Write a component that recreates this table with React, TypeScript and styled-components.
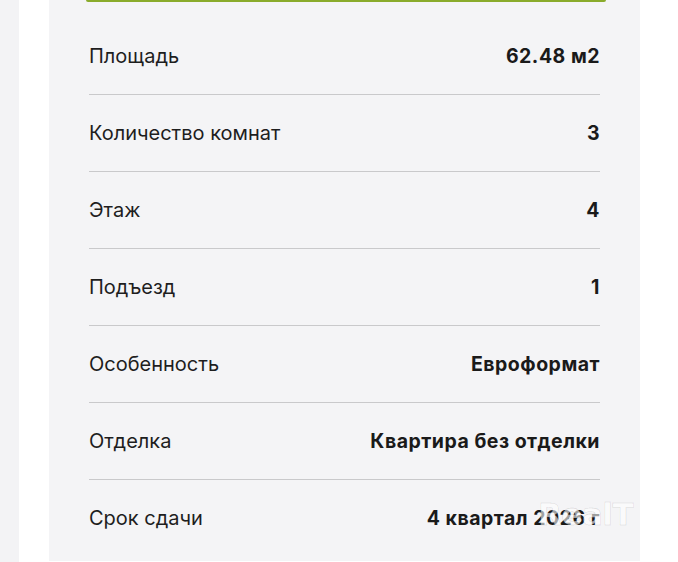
import React from "react";
import styled, { createGlobalStyle } from "styled-components";

const GlobalStyle = createGlobalStyle`
  html, body {
    margin: 0;
    padding: 0;
    background: #ffffff;
  }
  body {
    font-family: Inter, "Noto Sans", "Liberation Sans", sans-serif;
    color: #1c1c1c;
  }
`;

const Page = styled.div`
  position: relative;
  display: flex;
  height: 562px;
  overflow: hidden;
`;

const SideStrip = styled.div`
  width: 19px;
  flex-shrink: 0;
  background: #f3f3f5;
`;

const Panel = styled.section`
  margin-left: 30px;
  width: 591px;
  height: 561px;
  background: #f4f4f6;
  padding: 0 40px;
  box-sizing: border-box;
  display: flex;
  flex-direction: column;
`;

const ActionButton = styled.div`
  height: 2px;
  margin: 0 -6px 16px -3px;
  background: #8aab2c;
  border-radius: 0 0 8px 8px;
`;

const Row = styled.div<{ $last?: boolean }>`
  display: flex;
  align-items: center;
  justify-content: space-between;
  height: 76px;
  border-bottom: ${(p) => (p.$last ? "none" : "1px solid #c9c9cb")};
  font-size: 20px;
`;

const Label = styled.span`
  font-weight: 400;
  color: #1e1e1e;
`;

const Value = styled.span`
  font-weight: 700;
  font-size: 19.5px;
  letter-spacing: 0.5px;
  color: #1a1a1a;
`;

const Watermark = styled.div`
  position: absolute;
  left: 538px;
  top: 496px;
  font-family: "DejaVu Sans", sans-serif;
  font-weight: 700;
  font-size: 31px;
  letter-spacing: -0.5px;
  color: rgba(255, 255, 255, 0.6);
  -webkit-text-stroke: 0.8px rgba(0, 0, 0, 0.1);
  pointer-events: none;
`;

const rows = [
  { label: "Площадь", value: "62.48 м2" },
  { label: "Количество комнат", value: "3" },
  { label: "Этаж", value: "4" },
  { label: "Подъезд", value: "1" },
  { label: "Особенность", value: "Евроформат" },
  { label: "Отделка", value: "Квартира без отделки" },
  { label: "Срок сдачи", value: "4 квартал 2026 г" },
];

const App: React.FC = () => {
  return (
    <>
      <GlobalStyle />
      <Page>
        <SideStrip />
        <Panel>
          <ActionButton />
          {rows.map((r, i) => (
            <Row key={r.label} $last={i === rows.length - 1}>
              <Label>{r.label}</Label>
              <Value>{r.value}</Value>
            </Row>
          ))}
        </Panel>
        <Watermark>RealT</Watermark>
      </Page>
    </>
  );
};

export default App;
